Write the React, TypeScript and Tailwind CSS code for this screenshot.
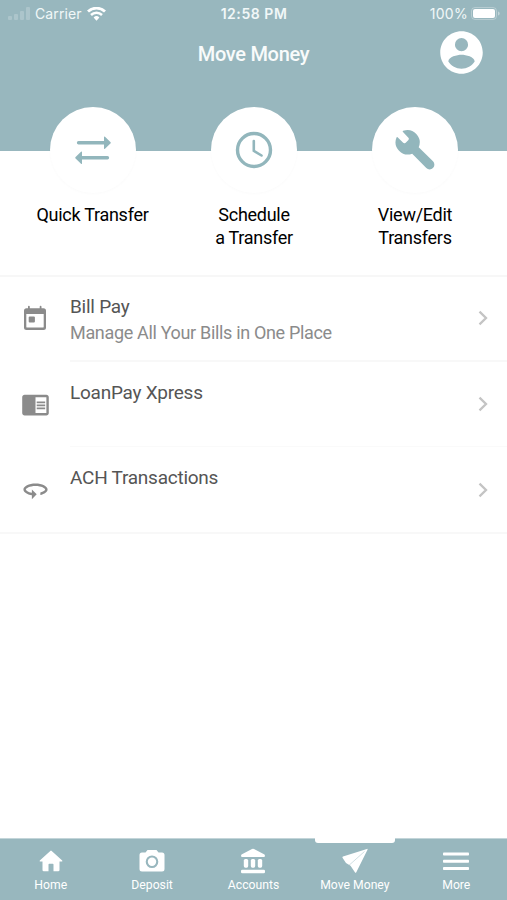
import React from "react";
import clsx from "clsx";
import { MdChromeReaderMode } from "react-icons/md";

const AccountIcon = () => (
  <svg viewBox="0 0 24 24" className="size-[51px] fill-white">
    <path d="M12 2C6.48 2 2 6.48 2 12s4.48 10 10 10 10-4.48 10-10S17.52 2 12 2zm0 3.200a3.100 3.100 0 1 1 0 6.200 3.100 3.100 0 0 1 0-6.200zm0 14.400c-2.600 0-4.900-1.300-6.200-3.400.1-2.100 4.100-3.100 6.200-3.100s6.100 1 6.200 3.100c-1.300 2.100-3.600 3.400-6.200 3.400z" />
  </svg>
);

const StatusBar = () => (
  <div className="flex h-[27px] items-center justify-between pl-2 pr-[7px] text-[14px] text-[#f1f7f8]">
    <div className="flex w-[150px] items-center">
      <svg viewBox="0 0 22 14" className="h-[14px] w-[22px] fill-white/20">
        <rect x="0" y="9" width="4" height="4" rx="1" />
        <rect x="6" y="7" width="4" height="6" rx="1" />
        <rect x="12" y="4" width="4" height="9" rx="1" />
        <rect x="18" y="0" width="4" height="13" rx="1" />
      </svg>
      <span className="ml-[5px] tracking-[0.1px]">Carrier</span>
      <svg
        viewBox="0 0 19 14"
        className="ml-[5px] h-[14px] w-[19px] fill-none stroke-white"
      >
        <path d="M1 4.6a12.2 12.2 0 0 1 17 0" strokeWidth="2.8" />
        <path d="M4 8a8 8 0 0 1 11 0" strokeWidth="2.5" />
        <path
          d="M6.6 10.5a4.2 4.2 0 0 1 5.8 0L9.5 13.8z"
          className="fill-white stroke-none"
        />
      </svg>
    </div>
    <span className="text-[14px] font-semibold tracking-[0.55px]">
      12:58 PM
    </span>
    <div className="flex w-[150px] items-center justify-end">
      <span className="text-[14px] tracking-[0.3px]">100%</span>
      <svg viewBox="0 0 29 13" className="ml-[3px] h-[13px] w-[29px]">
        <rect
          x="0.5"
          y="0.5"
          width="25"
          height="12"
          rx="3.5"
          className="fill-none stroke-white/30"
        />
        <rect x="2" y="2" width="22" height="9" rx="2" className="fill-white" />
        <path
          d="M27 4.500v4c1-.3 1.700-1 1.700-2s-.7-1.700-1.700-2z"
          className="fill-white/40"
        />
      </svg>
    </div>
  </div>
);

const TransferIcon = () => (
  <svg viewBox="0 0 36 28" className="h-[28px] w-[36px] fill-[#92b6bc]">
    <path d="M3.500 5.100h25.500V1.200q0-1.200 1-.4l5.400 5.100q.8.800 0 1.600L30 12.700q-1 .8-1-.4V8.400H3.500a1.650 1.650 0 0 1 0-3.300z" />
    <path d="M32.500 20.100H7V16.200q0-1.200-1-.4L.6 20.900q-.8.800 0 1.600L6 27.700q1 .8 1-.4v-3.900h25.500a1.650 1.650 0 0 0 0-3.300z" />
  </svg>
);

const ClockIcon = () => (
  <svg
    viewBox="0 0 38 38"
    className="size-[38px] fill-none stroke-[#92b6bc] stroke-[3.4]"
  >
    <circle cx="19" cy="19" r="16.500" />
    <path
      d="M18.800 10v9.800l7.700 4.700"
      strokeWidth="2.600"
      strokeLinecap="round"
    />
  </svg>
);

const WrenchIcon = () => (
  <svg
    viewBox="0 0 40 41"
    className="mr-px mb-[2px] h-[41px] w-[40px] fill-[#92b6bc]"
  >
    <path d="M8.200 1.700A12.400 12.400 0 0 1 23.700 18.200L38 32.300a4.700 4.700 0 0 1-6.700 6.700L17.200 24.700A12.400 12.400 0 0 1 1.500 8.400q.4-.7 1.100-.1l5.600 5.500q1 .9 2.200.1l2.800-2.700q1.200-1.300.2-2.500L8 3.100q-.7-.8.200-1.400z" />
  </svg>
);

const CalendarIcon = () => (
  <svg viewBox="0 0 24 26" className="mb-[2px] h-[26px] w-[24px] fill-current">
    <path
      fillRule="evenodd"
      d="M5 1.700a.9.900 0 0 1 1.800 0V3.200h9.900V1.700a.9.900 0 0 1 1.800 0V3.200h2A2.500 2.500 0 0 1 23 5.700v16.800a2.500 2.500 0 0 1-2.500 2.500h-17A2.500 2.500 0 0 1 1 22.500V5.700a2.500 2.500 0 0 1 2.500-2.500H5zM3.300 9v12.700q0 .9.9.9h15.600q.9 0 .9-.9V9z"
    />
    <rect x="5.700" y="11.500" width="6.200" height="6" rx="1" />
  </svg>
);

const ACTIONS = [
  { lines: ["Quick Transfer"], icon: <TransferIcon /> },
  { lines: ["Schedule", "a Transfer"], icon: <ClockIcon /> },
  { lines: ["View/Edit", "Transfers"], icon: <WrenchIcon /> },
];

const ROWS = [
  {
    title: "Bill Pay",
    subtitle: "Manage All Your Bills in One Place",
    icon: <CalendarIcon />,
    border: "border-b-2 border-[#f8f8f8]",
  },
  {
    title: "LoanPay Xpress",
    icon: <MdChromeReaderMode className="size-[29px]" />,
    border: "border-b border-[#fafafa]",
  },
  {
    title: "ACH Transactions",
    icon: (
      <svg viewBox="0 0 24 24" className="size-[29px] fill-current">
        <path d="M12 7C6.480 7 2 9.240 2 12c0 2.240 2.940 4.130 7 4.770V20l4-4-4-4v2.730c-3.150-.56-5-1.900-5-2.730 0-1.060 3.040-3 8-3s8 1.940 8 3c0 .73-1.460 1.890-4 2.530v2.050c3.530-.77 6-2.530 6-4.580 0-2.760-4.480-5-10-5z" />
      </svg>
    ),
    border: "",
  },
];

const TABS = [
  {
    name: "Home",
    icon: (
      <svg viewBox="0 0 24 22" className="h-[22px] w-[24px] fill-white">
        <path d="M11.300.9q.7-.6 1.400 0L23.200 10.600q.7.900-.4 1H20.500v8.400a1.300 1.300 0 0 1-1.300 1.300h-4.700v-6.800q0-.8-.8-.8h-3.400q-.8 0-.8.8v6.800H4.800a1.300 1.300 0 0 1-1.300-1.300v-8.400H1.200q-1.100-.1-.4-1z" />
      </svg>
    ),
  },
  {
    name: "Deposit",
    icon: (
      <svg viewBox="0 0 26 24" className="h-[24px] w-[26px] fill-white">
        <path
          fillRule="evenodd"
          d="M8.500 1h9l2 2.600H23a2.500 2.500 0 0 1 2.500 2.500v14A2.500 2.500 0 0 1 23 22.600H3a2.500 2.500 0 0 1-2.500-2.500v-14A2.500 2.500 0 0 1 3 3.600h3.500zM13 6.500a6.300 6.300 0 1 0 0 12.600 6.300 6.300 0 0 0 0-12.600z"
        />
        <circle cx="13" cy="12.800" r="4.200" />
      </svg>
    ),
  },
  {
    name: "Accounts",
    icon: (
      <svg viewBox="0 0 26 26" className="size-[26px] fill-white">
        <path d="M12 1q1-.6 2 0L24.500 6.500q1.200 2.500-.7 2.500H2.200q-1.900 0-.7-2.500z" />
        <rect x="3.800" y="11" width="4.400" height="8.700" rx="1.600" />
        <rect x="10.800" y="11" width="4.400" height="8.700" rx="1.600" />
        <rect x="17.800" y="11" width="4.400" height="8.700" rx="1.600" />
        <rect x="1" y="21.700" width="24" height="3.600" rx="1.300" />
      </svg>
    ),
  },
  {
    name: "Move Money",
    active: true,
    icon: (
      <svg viewBox="0 0 26 26" className="size-[26px] fill-white">
        <path d="M24.900.9q1-.2.600.8L14.300 24.300q-.7 1.100-1.400 0L8.500 17.700 4 15 .5 9.800q-.4-.9.500-1.200z" />
        <path
          d="M22.500 3.500 7 17.300"
          className="fill-none stroke-[#98b7be]/50 stroke-[0.900]"
        />
      </svg>
    ),
  },
  {
    name: "More",
    icon: (
      <svg viewBox="0 0 26 20" className="h-[20px] w-[26px] fill-white">
        <rect y="1.500" width="26" height="3" rx="0.800" />
        <rect y="8.700" width="26" height="3" rx="0.800" />
        <rect y="16" width="26" height="3" rx="0.800" />
      </svg>
    ),
  },
];

const MoveMoney = () => {
  return (
    <div className="flex h-[900px] w-[507px] flex-col overflow-hidden bg-white font-[Roboto,sans-serif]">
      <header className="h-[151px] shrink-0 bg-[#98b7be] font-[Inter,sans-serif]">
        <StatusBar />
        <div className="grid h-[50px] grid-cols-[1fr_auto_1fr] items-center">
          <h1 className="col-start-2 pt-[3px] font-[Roboto,sans-serif] text-[20px] font-medium tracking-[-0.300px] text-[#f8fbfb]">
            Move Money
          </h1>
          <button className="mr-[20px] justify-self-end">
            <AccountIcon />
          </button>
        </div>
      </header>
      <section className="-mt-[44px] grid h-[170px] shrink-0 grid-cols-[185px_138px_184px] border-b-2 border-[#f7f7f7]">
        {ACTIONS.map(({ lines, icon }) => (
          <button
            key={lines[0]}
            className="flex flex-col items-center text-[18px] leading-[22.500px] tracking-[-0.280px] text-black"
          >
            <span className="mb-[11px] flex size-[86px] items-center justify-center rounded-full bg-white shadow-[0_1px_3px_rgba(0,0,0,0.02)]">
              {icon}
            </span>
            {lines.map(line => (
              <span key={line} className="whitespace-nowrap">
                {line}
              </span>
            ))}
          </button>
        ))}
      </section>
      <main className="-mt-px flex-1">
        <div className="h-[258px] border-b-2 border-[#f8f8f8]">
          {ROWS.map(({ title, subtitle, icon, border }) => (
            <div key={title} className="flex h-[85.500px]">
              <span className="flex w-[70px] items-center justify-center text-[#8b8b8b]">
                {icon}
              </span>
              <div className={clsx("flex flex-1", border)}>
                <div className="flex-1 pt-[18px]">
                  <h2 className="text-[19px] leading-[26px] tracking-[-0.250px] text-[#555]">
                    {title}
                  </h2>
                  <p className="text-[18px] leading-[26px] tracking-[-0.330px] text-[#8b8b8b]">
                    {subtitle}
                  </p>
                </div>
                <svg
                  viewBox="0 0 10 16"
                  className="mr-[19px] h-[16px] w-[10px] self-center fill-none stroke-[#c4c4c4] stroke-[2.3]"
                >
                  <path d="M1.500 1.700 8 8l-6.500 6.300" />
                </svg>
              </div>
            </div>
          ))}
        </div>
      </main>
      <nav className="grid h-[62px] shrink-0 grid-cols-5 border-t border-[#c3d5d9] bg-[#98b7be]">
        {TABS.map(({ name, icon, active }) => (
          <button
            key={name}
            className="flex flex-col items-center text-[12.200px] text-white"
          >
            <span
              className={clsx("-mt-px h-[5px] w-[80px] rounded-b-[3px]", {
                "bg-white": active,
              })}
            />
            <span className="flex h-[36px] items-center">{icon}</span>
            <span className="leading-[12px]">{name}</span>
          </button>
        ))}
      </nav>
    </div>
  );
};

export default MoveMoney;
